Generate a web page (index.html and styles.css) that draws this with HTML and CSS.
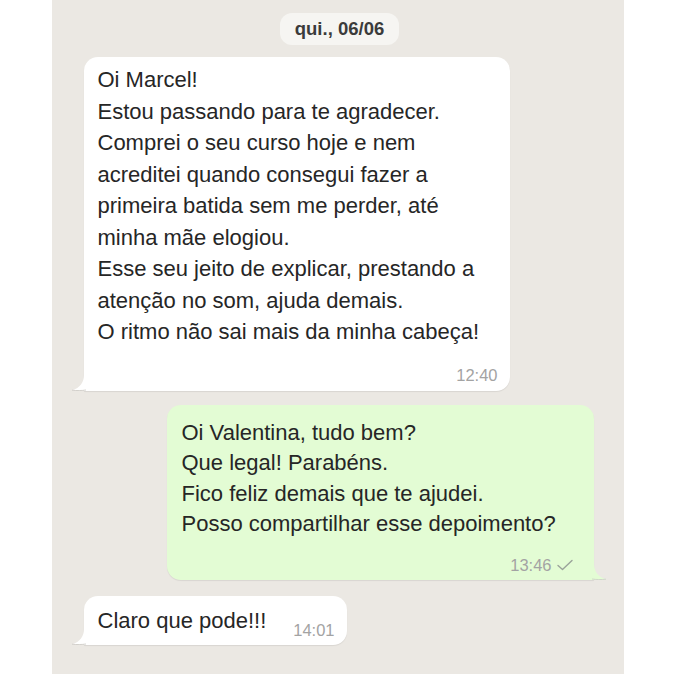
FILE: index.html
```html
<!DOCTYPE html>
<html lang="pt-BR">
<head>
<meta charset="utf-8">
<title>Conversa</title>
<link rel="stylesheet" href="styles.css">
</head>
<body>
<main class="chat">
  <div class="date-row"><span class="date-chip">qui., 06/06</span></div>

  <div class="msg msg-in msg-first">
    <div class="bubble bubble-in bubble-long">
      <p class="text">Oi Marcel!<br>Estou passando para te agradecer.<br>Comprei o seu curso hoje e nem<br>acreditei quando consegui fazer a<br>primeira batida sem me perder, até<br>minha mãe elogiou.<br>Esse seu jeito de explicar, prestando a<br>atenção no som, ajuda demais.<br>O ritmo não sai mais da minha cabeça!</p>
      <div class="meta"><span class="time">12:40</span></div>
      <svg class="tail tail-in" width="14" height="16" viewBox="0 0 14 16"><path d="M12 0 C12 7 8 13 0 15.2 C5 15.8 10 15.6 14 15 L14 0 Z" fill="#ffffff"/><path d="M0 15.2 C5 15.8 10 15.6 14 15" fill="none" stroke="#c9c6c1" stroke-width="0.8"/></svg>
    </div>
  </div>

  <div class="msg msg-out">
    <div class="bubble bubble-out">
      <p class="text text-out">Oi Valentina, tudo bem?<br>Que legal! Parabéns.<br>Fico feliz demais que te ajudei.<br>Posso compartilhar esse depoimento?</p>
      <div class="meta meta-out"><span class="time">13:46</span>
        <svg class="check" width="18" height="14" viewBox="0 0 18 14"><path d="M2 7.5 L6.5 11.5 L16 2.5" fill="none" stroke="#9aa39a" stroke-width="1.4" stroke-linecap="round" stroke-linejoin="round"/></svg>
      </div>
      <svg class="tail tail-out" width="14" height="16" viewBox="0 0 14 16"><path d="M2 0 C2 7 6 13 14 15.2 C9 15.8 4 15.6 0 15 L0 0 Z" fill="#e3fcd4"/><path d="M14 15.2 C9 15.8 4 15.6 0 15" fill="none" stroke="#c9cfc4" stroke-width="0.8"/></svg>
    </div>
  </div>

  <div class="msg msg-in msg-last">
    <div class="bubble bubble-in bubble-short">
      <p class="text">Claro que pode!!!</p>
      <span class="time time-inline">14:01</span>
      <svg class="tail tail-in" width="14" height="16" viewBox="0 0 14 16"><path d="M12 0 C12 7 8 13 0 15.2 C5 15.8 10 15.6 14 15 L14 0 Z" fill="#ffffff"/><path d="M0 15.2 C5 15.8 10 15.6 14 15" fill="none" stroke="#c9c6c1" stroke-width="0.8"/></svg>
    </div>
  </div>
</main>
</body>
</html>
```
FILE: styles.css
```css
* { box-sizing: border-box; }

html, body {
  margin: 0;
  padding: 0;
  background: #ffffff;
}

body {
  font-family: "Liberation Sans", Arial, sans-serif;
  color: #262626;
}

.chat {
  width: 572px;
  height: 674px;
  margin: 0 auto;
  background: #ebe8e3;
  padding: 13px 30px 0 32px;
  display: flex;
  flex-direction: column;
}

.date-row {
  display: flex;
  justify-content: center;
  padding-left: 2px;
}

.date-chip {
  display: inline-block;
  height: 32px;
  line-height: 32px;
  padding: 0 15px;
  border-radius: 12px;
  background: #f6f5f2;
  font-weight: bold;
  font-size: 18.5px;
  color: #3b3b3b;
}

.msg {
  display: flex;
  margin-top: 14px;
}

.msg-first { margin-top: 12px; }
.msg-last { margin-top: 16px; }

.msg-in { justify-content: flex-start; }
.msg-out { justify-content: flex-end; }

.bubble {
  position: relative;
  border-radius: 14px;
  box-shadow: 0 1px 1px rgba(0, 0, 0, 0.08);
}

.bubble-in {
  background: #ffffff;
  border-bottom-left-radius: 0;
}

.bubble-out {
  background: #e3fcd4;
  border-bottom-right-radius: 0;
  width: 427px;
  padding: 13px 14px 4px 15px;
}

.bubble-long {
  width: 426px;
  padding: 7px 12px 5px 14px;
}

.bubble-short {
  width: 263px;
  display: flex;
  align-items: flex-end;
  justify-content: space-between;
  padding: 9px 12px 9px 14px;
}

.text {
  margin: 0;
  font-size: 22px;
  line-height: 31.5px;
}

.text-out {
  line-height: 30.5px;
}

.bubble-short .text {
  line-height: 31px;
}

.meta {
  display: flex;
  justify-content: flex-end;
  align-items: center;
  gap: 4px;
  margin-top: 16px;
  height: 22px;
}

.meta-out {
  margin-top: 14px;
}

.time {
  font-size: 16.5px;
  color: #a3a3a3;
  line-height: 22px;
}

.time-inline {
  margin-bottom: -5px;
}

.check {
  display: block;
  margin-right: 6px;
}

.tail {
  position: absolute;
  bottom: 0;
}

.tail-in { left: -12px; }
.tail-out { right: -12px; }
```
